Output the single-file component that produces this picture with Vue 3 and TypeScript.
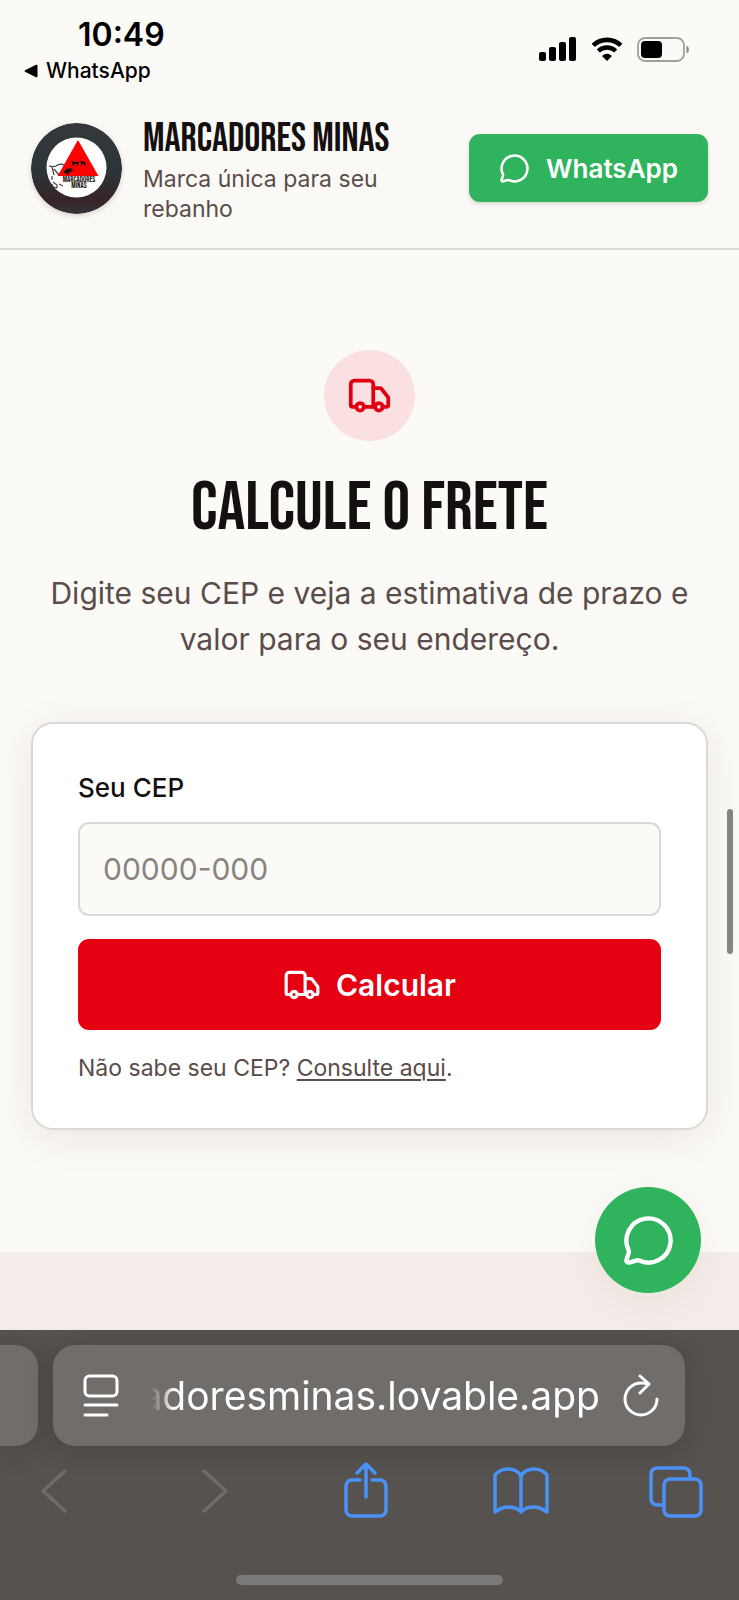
<script setup lang="ts">
import { ref } from 'vue'

const cep = ref('')

const truckPaths: string[] = [
  'M14 18V6a2 2 0 0 0-2-2H4a2 2 0 0 0-2 2v11a1 1 0 0 0 1 1h2',
  'M15 18H9',
  'M19 18h2a1 1 0 0 0 1-1v-3.65a1 1 0 0 0-.22-.624l-3.48-4.35A1 1 0 0 0 17.52 8H14',
]
const chatPath =
  'M2.992 16.342a2 2 0 0 1 .094 1.167l-1.065 3.29a1 1 0 0 0 1.236 1.168l3.413-.998a2 2 0 0 1 1.099.092 10 10 0 1 0-4.777-4.719'

function formatCep(): void {
  const digits = cep.value.replace(/\D/g, '').slice(0, 8)
  cep.value = digits.length > 5 ? `${digits.slice(0, 5)}-${digits.slice(5)}` : digits
}
</script>

<template>
  <div class="screen">
    <div class="status">
      <div class="status-left">
        <span class="time">10:49</span>
        <a class="back" href="#">
          <svg width="14" height="14" viewBox="0 0 14 14" aria-hidden="true">
            <path d="M1.5 6 12 .8q1.5-.5 1.5 1v10.4q0 1.5-1.5 1L1.500 8q-2-1 0-2z" fill="#000" />
          </svg>
          WhatsApp
        </a>
      </div>
      <div class="status-icons">
        <svg width="38" height="24" viewBox="0 0 38 24" aria-hidden="true">
          <rect x="0" y="15" width="7" height="9" rx="2" />
          <rect x="10" y="10" width="7" height="14" rx="2" />
          <rect x="20" y="5" width="7" height="19" rx="2" />
          <rect x="30" y="0" width="7" height="24" rx="2" />
        </svg>
        <svg width="32" height="24" viewBox="0 0 32 24" aria-hidden="true">
          <path d="M2.2 8.4a20 20 0 0 1 27.6 0" fill="none" stroke="#000" stroke-width="4.6" />
          <path d="M7.3 14a12.5 12.5 0 0 1 17.4 0" fill="none" stroke="#000" stroke-width="4.4" />
          <path d="M16 24l-5-5q5-4.400 10 0z" />
        </svg>
        <svg width="53" height="25" viewBox="0 0 53 25" aria-hidden="true">
          <rect x="1" y="1" width="46" height="23" rx="7" fill="none" stroke="#a09f9c" stroke-width="1.8" />
          <rect x="4" y="4" width="21" height="17" rx="4" />
          <path d="M49.5 8.5q2.5 1.2 2.5 4t-2.5 4z" fill="#8b8a87" />
        </svg>
      </div>
    </div>

    <header class="header">
      <svg class="logo" viewBox="0 0 91 91" role="img" aria-label="Marcadores Minas">
        <defs>
          <linearGradient id="ring" x1="0" y1="0" x2="0" y2="1">
            <stop offset="0" stop-color="#34383b" />
            <stop offset="0.55" stop-color="#2b3438" />
            <stop offset="0.85" stop-color="#382427" />
            <stop offset="1" stop-color="#33343a" />
          </linearGradient>
        </defs>
        <circle cx="45.5" cy="45.5" r="45.5" fill="url(#ring)" />
        <circle cx="45.5" cy="44.5" r="30" fill="#fff" />
        <path d="M47 17 67.5 53H26.5z" fill="#f00" />
        <g fill="#1b1111">
          <path d="M40 38h2l1 1h4l1-1v2l-1 1v2h-1v-2h-3v2h-1.500v-3zM49 38h2l1 1h2l1 1-1 1v2h-1v-2h-2v2h-1v-3z" />
          <path d="M35 46l6-1-1.500 2 4-.5-5 3-2 3-1-2-3-1z" />
        </g>
        <g fill="none" stroke="#444" stroke-width="1.2">
          <path d="M18 43q5 1 7 0m0 0q4-3 8-1m-12 2 2 8m0-6 5 6m-7 1v4m7 4 4 2M22 59l4 3v3m-5-4 1 3 4 1" />
        </g>
        <text x="48" y="59" class="logo-text">MARCADORES</text>
        <text x="48" y="65" class="logo-text">MINAS</text>
      </svg>
      <div class="brand">
        <strong class="brand-name">MARCADORES MINAS</strong>
        <span class="brand-tag">Marca única para seu rebanho</span>
      </div>
      <a class="whats" href="#">
        <svg class="line-icon" width="31" height="31" viewBox="0 0 24 24" aria-hidden="true"><path :d="chatPath" /></svg>
        WhatsApp
      </a>
    </header>

    <main class="main">
      <section class="freight">
        <div class="badge">
          <svg class="line-icon" width="45" height="45" viewBox="0 0 24 24" aria-hidden="true">
            <path v-for="d in truckPaths" :key="d" :d="d" />
            <circle cx="17" cy="18" r="2" />
            <circle cx="7" cy="18" r="2" />
          </svg>
        </div>
        <h1 class="title">CALCULE O FRETE</h1>
        <p class="lead">Digite seu CEP e veja a estimativa de prazo e valor para o seu endereço.</p>

        <form class="card" @submit.prevent>
          <label class="label" for="cep">Seu CEP</label>
          <input id="cep" v-model="cep" class="input" inputmode="numeric" placeholder="00000-000" @input="formatCep" />
          <button class="submit" type="submit">
            <svg class="line-icon" width="38" height="38" viewBox="0 0 24 24" aria-hidden="true">
              <path v-for="d in truckPaths" :key="d" :d="d" />
              <circle cx="17" cy="18" r="2" />
              <circle cx="7" cy="18" r="2" />
            </svg>
            Calcular
          </button>
          <p class="help">Não sabe seu CEP? <a href="#">Consulte aqui</a>.</p>
        </form>
      </section>
      <section class="next"></section>
      <button class="fab" type="button" aria-label="WhatsApp">
        <svg class="line-icon" width="53" height="53" viewBox="0 0 24 24" aria-hidden="true"><path :d="chatPath" /></svg>
      </button>
      <div class="thumb"></div>
    </main>

    <footer class="browser">
      <div class="tabs">
        <div class="tab-prev"></div>
        <div class="address">
          <button type="button" class="plain" aria-label="Menu">
            <svg width="36" height="44" viewBox="0 0 36 44" fill="none" stroke="#fff" stroke-width="3" stroke-linecap="round">
              <rect x="2" y="2" width="32" height="20" rx="4.5" />
              <path d="M2 31h32M2 41h22" />
            </svg>
          </button>
          <span class="url">marcadoresminas.lovable.app</span>
          <button type="button" class="plain" aria-label="Recarregar">
            <svg width="38" height="44" viewBox="0 0 38 44" fill="none" stroke="#fff" stroke-width="3" stroke-linecap="round" stroke-linejoin="round">
              <path d="M35 25a16 16 0 1 1-16-16q4 0 8 1M18 2l9 8-9 9" />
            </svg>
          </button>
        </div>
      </div>
      <nav class="tools">
        <button type="button" class="plain" aria-label="Voltar">
          <svg width="54" height="58" viewBox="0 0 54 58" fill="none" stroke="#6f6b68" stroke-width="3.5" stroke-linecap="round" stroke-linejoin="round"><path d="M38 10 16 30l22 20" /></svg>
        </button>
        <button type="button" class="plain" aria-label="Avançar">
          <svg width="60" height="58" viewBox="0 0 60 58" fill="none" stroke="#6f6b68" stroke-width="3.5" stroke-linecap="round" stroke-linejoin="round"><path d="M24 10 46 30 24 50" /></svg>
        </button>
        <button type="button" class="plain" aria-label="Compartilhar">
          <svg class="blue" width="54" height="58" viewBox="0 0 54 58"><path d="M21 19h-8a6 6 0 0 0-6 6v24a6 6 0 0 0 6 6h28a6 6 0 0 0 6-6V25a6 6 0 0 0-6-6h-8M27 36V3M18 12l9-9 9 9" /></svg>
        </button>
        <button type="button" class="plain" aria-label="Favoritos">
          <svg class="blue" width="58" height="58" viewBox="0 0 58 58"><path d="M29 15v36Q25 46 16 46q-6 0-13 5V14Q8 8 16 8q9 0 13 7 4-7 13-7 8 0 13 6v37q-7-5-13-5-9 0-13 5" /></svg>
        </button>
        <button type="button" class="plain" aria-label="Abas">
          <svg class="blue" width="54" height="58" viewBox="0 0 54 58"><path d="M14 44H8a6 6 0 0 1-6-6V13a6 6 0 0 1 6-6h27a6 6 0 0 1 6 6v5" /><rect x="15" y="18" width="37" height="37" rx="6" /></svg>
        </button>
      </nav>
      <div class="home"></div>
    </footer>
  </div>
</template>

<style>
body {
  margin: 0;
  background: #fcfaf6;
}
</style>

<style scoped>
.screen {
  display: flex;
  flex-direction: column;
  min-height: 100vh;
  overflow: hidden;
  background: #fcfaf6;
  color: #141010;
  font-family: Inter, 'Liberation Sans', sans-serif;
}
.status {
  display: flex;
  justify-content: space-between;
  height: 88px;
  padding: 0 49px 0 24px;
}
.status-left {
  display: flex;
  flex-direction: column;
  padding-top: 16px;
  color: #000;
}
.time {
  padding-left: 54px;
  font-size: 32px;
  font-weight: 600;
  line-height: 38px;
}
.back {
  display: flex;
  align-items: center;
  gap: 8px;
  color: #000;
  font-size: 21px;
  font-weight: 500;
  line-height: 34px;
  text-decoration: none;
}
.status-icons {
  display: flex;
  align-items: center;
  gap: 14px;
  padding-top: 10px;
}
.line-icon {
  flex: none;
  fill: none;
  stroke: currentColor;
  stroke-width: 2;
  stroke-linecap: round;
  stroke-linejoin: round;
}
.header {
  display: flex;
  align-items: center;
  min-height: 160px;
  padding: 0 31px;
  border-bottom: 2px solid #dcd8d5;
  background: #fbf9f5;
}
.logo {
  flex: none;
  width: 91px;
  height: 91px;
  border-radius: 50%;
  box-shadow: 0 2px 5px rgba(30, 10, 10, 0.15);
}
.logo-text {
  fill: #141010;
  font-family: 'Bebas Neue', 'Liberation Sans', sans-serif;
  font-size: 8px;
  font-weight: 400;
  text-anchor: middle;
}
.brand {
  display: flex;
  flex: 1;
  flex-direction: column;
  gap: 6px;
  padding: 8px 48px 0 21px;
}
.brand-name,
.title {
  font-family: 'Bebas Neue', 'Roboto Condensed', 'Liberation Sans', sans-serif;
  font-weight: 400;
  white-space: nowrap;
}
.brand-name {
  font-size: 40px;
  line-height: 38px;
}
.brand-tag {
  color: #5a4c4a;
  font-size: 23px;
  line-height: 30px;
}
.whats {
  display: flex;
  flex: none;
  align-items: center;
  gap: 16px;
  height: 68px;
  padding: 0 30px;
  border-radius: 11px;
  background: #2fb45d;
  box-shadow: 0 2px 4px rgba(20, 16, 16, 0.14);
  color: #fff;
  font-size: 26px;
  font-weight: 600;
  text-decoration: none;
}
.main {
  position: relative;
  display: flex;
  flex: 1;
  flex-direction: column;
}
.freight {
  display: flex;
  flex-direction: column;
  align-items: center;
  padding: 100px 31px 122px;
}
.badge {
  display: grid;
  place-items: center;
  width: 91px;
  height: 91px;
  border-radius: 50%;
  background: #fbe0e1;
  color: #e00012;
}
.title {
  margin: 30px 0 0;
  font-size: 69px;
  line-height: 76px;
}
.lead {
  margin: 23px 0 0;
  color: #5a4c4a;
  font-size: 30px;
  line-height: 46px;
  text-align: center;
}
.card {
  display: flex;
  flex-direction: column;
  align-self: stretch;
  box-sizing: border-box;
  margin-top: 60px;
  padding: 45px;
  border: 2px solid #dcd8d5;
  border-radius: 22px;
  background: #fff;
  box-shadow: 0 8px 40px rgba(60, 30, 20, 0.09);
}
.label {
  margin-bottom: 15px;
  font-size: 26px;
  font-weight: 500;
  line-height: 38px;
}
.input {
  box-sizing: border-box;
  width: 100%;
  height: 94px;
  padding: 0 23px;
  border: 2px solid #dcd8d5;
  border-radius: 11px;
  background: #fcfaf6;
  color: #141010;
  font: 400 30px Inter, 'Liberation Sans', sans-serif;
}
.input::placeholder {
  color: #878481;
  opacity: 1;
}
.submit {
  display: flex;
  align-items: center;
  justify-content: center;
  gap: 15px;
  height: 91px;
  margin-top: 23px;
  padding: 0;
  border: 0;
  border-radius: 11px;
  background: #e50012;
  color: #fff;
  font: 600 30px Inter, 'Liberation Sans', sans-serif;
}
.help {
  margin: 23px 0 0;
  color: #5a4c4a;
  font-size: 23px;
  line-height: 30px;
}
.help a {
  color: inherit;
  text-underline-offset: 3px;
}
.next {
  flex: 1;
  min-height: 78px;
  background: #f4ece8;
}
.fab {
  position: absolute;
  right: 38px;
  bottom: 37px;
  display: grid;
  place-items: center;
  width: 106px;
  height: 106px;
  padding: 0;
  border: 0;
  border-radius: 50%;
  background: #2fb45d;
  box-shadow: 0 8px 40px rgba(60, 30, 20, 0.05);
  color: #fff;
}
.thumb {
  position: absolute;
  top: 559px;
  right: 6px;
  width: 6px;
  height: 145px;
  border-radius: 3px;
  background: #858482;
}
.browser {
  padding-top: 15px;
  background: #56524f;
}
.tabs {
  display: flex;
  gap: 15px;
  padding-right: 54px;
}
.tab-prev,
.address {
  height: 101px;
  background: #716d6a;
  box-shadow: 0 4px 28px rgba(20, 16, 16, 0.2);
}
.tab-prev {
  width: 38px;
  border-radius: 0 22px 22px 0;
}
.address {
  display: flex;
  flex: 1;
  align-items: center;
  min-width: 0;
  box-sizing: border-box;
  padding: 0 25px 0 30px;
  border-radius: 22px;
}
.plain {
  display: grid;
  flex: none;
  place-items: center;
  padding: 0;
  border: 0;
  background: none;
}
.url {
  display: flex;
  flex: 1;
  justify-content: flex-end;
  min-width: 0;
  margin: 0 22px 0 32px;
  overflow: hidden;
  color: #fff;
  font-size: 39px;
  line-height: 56px;
  white-space: nowrap;
  -webkit-mask-image: linear-gradient(90deg, transparent, #000 24px);
  mask-image: linear-gradient(90deg, transparent, #000 24px);
}
.tools {
  display: flex;
  align-items: center;
  justify-content: space-between;
  padding: 15px 36px 0 27px;
}
.blue {
  fill: none;
  stroke: #4a92f7;
  stroke-width: 3.5;
  stroke-linecap: round;
  stroke-linejoin: round;
}
.home {
  width: 36%;
  height: 10px;
  margin: 56px auto 15px;
  border-radius: 5px;
  background: #7b7a79;
}
</style>
